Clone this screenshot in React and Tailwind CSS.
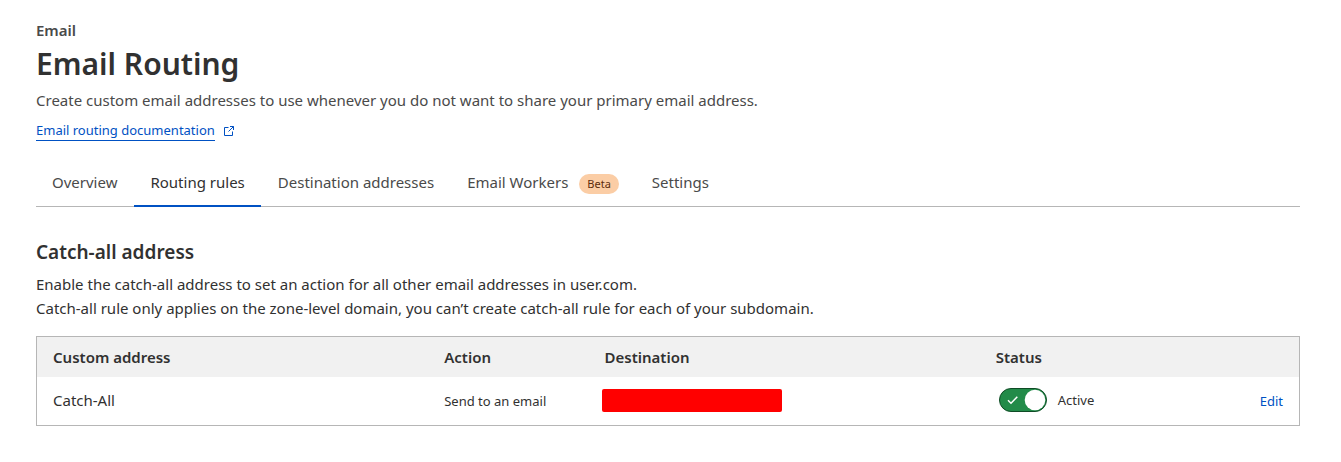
const tabs = [
  { label: "Overview" },
  { label: "Routing rules", active: true },
  { label: "Destination addresses" },
  { label: "Email Workers", badge: "Beta" },
  { label: "Settings" },
];

function ExternalIcon() {
  return (
    <svg className="size-3" viewBox="0 0 12 12" fill="none" stroke="currentColor" aria-hidden="true">
      <path d="M5.5 2.5h-4v8h8v-4M7 1.5h3.5V5M10.5 1.5l-5 5" />
    </svg>
  );
}

function Tab({ label, active, badge }) {
  return (
    <a
      href="#tab"
      aria-current={active ? "page" : undefined}
      className={
        active
          ? "-mb-px border-b-2 border-[#0051c3] px-4 pt-3 pb-[11px]"
          : "flex items-start px-4 pt-3 pb-[11px] text-[#4a4a4a]"
      }
    >
      {label}
      {badge && (
        <span className="mt-1 ml-[11px] rounded-full bg-[#fbcda5] px-2 text-[11px] leading-5 text-[#5b2c0c]">{badge}</span>
      )}
    </a>
  );
}

function Toggle() {
  return (
    <label className="flex cursor-pointer items-center gap-[11px] pl-[3px] text-[13px]">
      <span className="grid h-6 w-12 items-center">
        <input
          type="checkbox"
          role="switch"
          defaultChecked
          className="peer col-start-1 row-start-1 h-6 w-12 cursor-pointer appearance-none rounded-full border border-[#b6b6b6] bg-[#d9d9d9] checked:border-[#0f4b25] checked:bg-[#228b49]"
        />
        <svg className="pointer-events-none col-start-1 row-start-1 h-6 w-12" viewBox="0 0 48 24" fill="none" aria-hidden="true">
          <path d="M9 12.3l3 3 6.3-6.6" stroke="#fff" strokeWidth="1.5" />
          <circle cx="36" cy="12" r="10.3" fill="#fff" />
        </svg>
      </span>
      Active
    </label>
  );
}

export default function App() {
  return (
    <main className="bg-white pt-5 pr-[41px] pb-9 pl-9 font-['Noto_Sans',sans-serif] text-[15px] leading-6 text-[#313131]">
      <header>
        <p className="leading-5 font-semibold text-[#4a4a4a]">Email</p>
        <h1 className="mt-1 text-[30px] leading-10 font-semibold">Email Routing</h1>
        <p className="mt-1 text-[#4a4a4a]">
          Create custom email addresses to use whenever you do not want to share your primary email address.
        </p>
        <a href="#docs" className="mt-2 flex w-fit items-center gap-2 text-[13px] leading-5 text-[#0051c3]">
          <span className="border-b border-[#0051c3]">Email routing documentation</span>
          <ExternalIcon />
        </a>
      </header>
      <nav className="mt-[17px] flex gap-px border-b border-[#b6b6b6]">
        {tabs.map((tab) => (
          <Tab key={tab.label} {...tab} />
        ))}
      </nav>
      <section className="mt-[33px]">
        <h2 className="text-[19px] leading-6 font-semibold">Catch-all address</h2>
        <p className="mt-2">
          Enable the catch-all address to set an action for all other email addresses in user.com.
          <br />
          Catch-all rule only applies on the zone-level domain, you can’t create catch-all rule for each of your
          subdomain.
        </p>
        <div className="mt-4 border border-[#b6b6b6]">
          <table className="w-full table-fixed text-left">
            <thead>
              <tr className="h-10 bg-[#f1f1f1]">
                <th className="w-[31%] px-4 font-semibold">Custom address</th>
                <th className="w-[12.7%] px-4 font-semibold">Action</th>
                <th className="w-[31%] px-4 font-semibold">Destination</th>
                <th className="px-4 font-semibold">Status</th>
                <th className="px-4" aria-label="Actions"></th>
              </tr>
            </thead>
            <tbody>
              <tr className="h-12">
                <td className="px-4 pb-0.5">Catch-All</td>
                <td className="px-4 text-[13px]">Send to an email</td>
                <td className="px-3.5 pb-0.5">
                  <div className="h-[23px] w-[180px] rounded-xs bg-[#ff0000]" />
                </td>
                <td className="px-4 pb-0.5"><Toggle /></td>
                <td className="px-4 text-right text-[13px]">
                  <a href="#edit" className="text-[#0051c3]">Edit</a>
                </td>
              </tr>
            </tbody>
          </table>
        </div>
      </section>
    </main>
  );
}
